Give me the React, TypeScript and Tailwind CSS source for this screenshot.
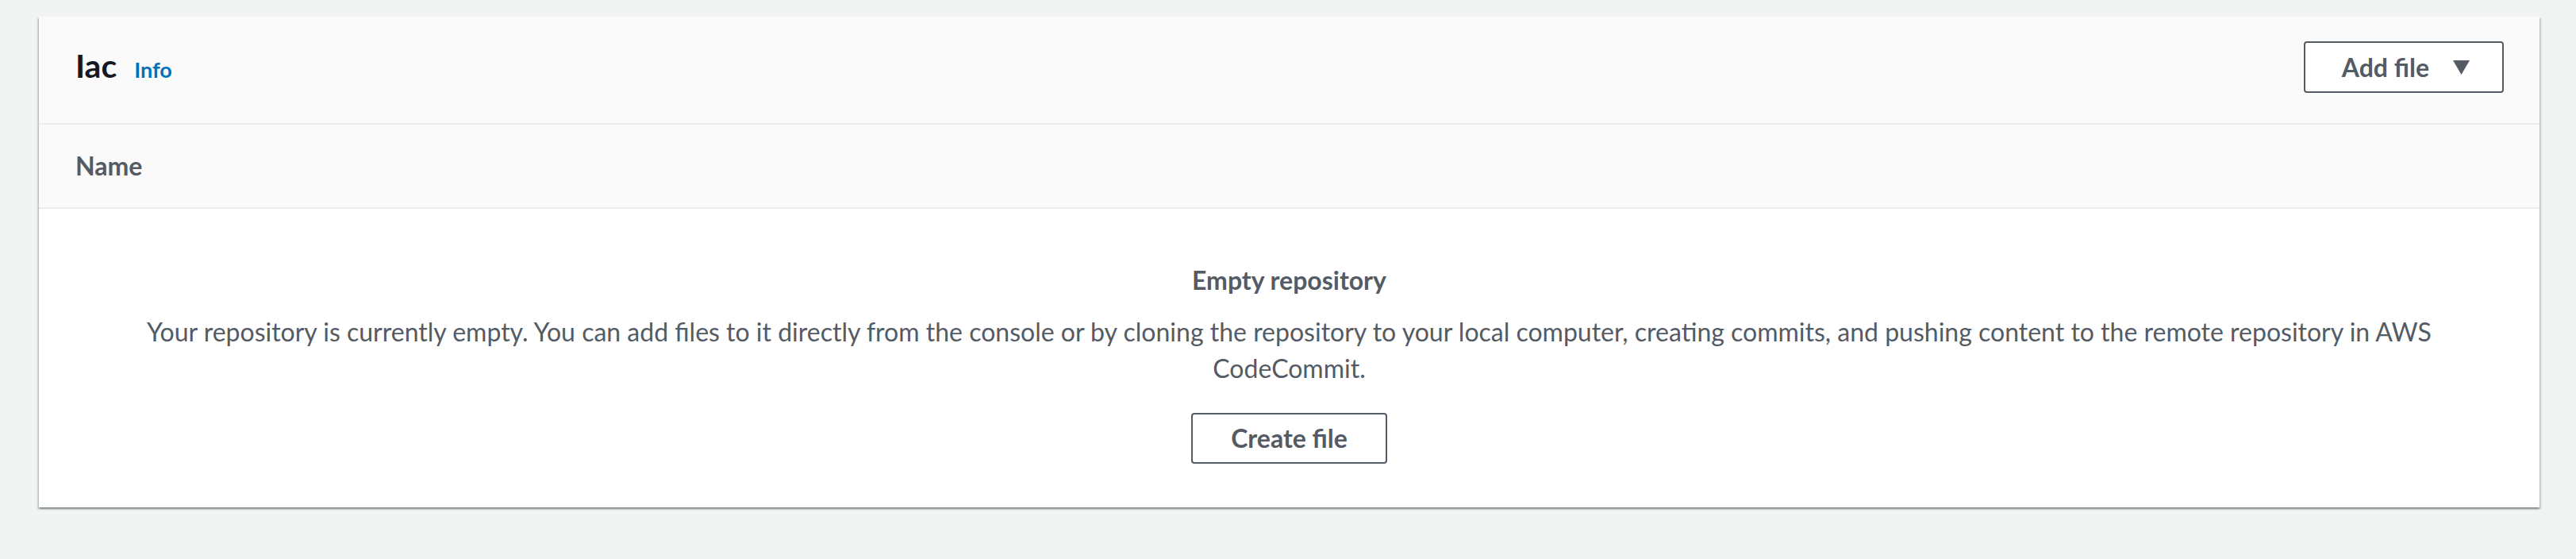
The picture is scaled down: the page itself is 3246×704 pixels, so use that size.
export default function App() {
  return (
    <div className="min-h-screen bg-[#f2f3f3] pl-[49px] pr-[46px] pt-[21px] font-['Lato',sans-serif]">
      <div className="bg-white shadow-[0_2px_2px_0_rgba(0,28,36,0.3),2px_2px_2px_0_rgba(0,28,36,0.15),-2px_2px_2px_0_rgba(0,28,36,0.15)]">
        {/* header */}
        <div className="flex items-center justify-between bg-[#fafafa] pl-[46px] pr-[45px] pt-[31px] pb-[38px]">
          <div className="flex items-baseline gap-[22px]">
            <h2 className="text-[41px] font-bold leading-[46px] text-[#16191f]">Iac</h2>
            <a className="text-[27px] font-bold text-[#0073bb]">Info</a>
          </div>
          <button className="flex h-[65px] items-center gap-[30px] rounded-[4px] border-2 border-[#545b64] bg-white pl-[46px] pr-[41px] text-[32px] font-bold text-[#545b64]">
            <span>Add file</span>
            <svg width="21" height="18" viewBox="0 0 21 18">
              <polygon points="0,0 21,0 10.5,18" fill="#545b64" />
            </svg>
          </button>
        </div>

        {/* table header */}
        <div className="flex h-[108px] items-center border-y-2 border-[#eaeded] bg-[#fafafa] px-[46px]">
          <span className="text-[32px] font-bold text-[#545b64]">Name</span>
        </div>

        {/* empty state */}
        <div className="flex flex-col items-center px-[46px] pt-[67px] pb-[55px] text-center text-[32px] leading-[46px] text-[#545b64]">
          <div className="font-bold">Empty repository</div>
          <p className="mt-[19px]">
            Your repository is currently empty. You can add files to it directly from the console or by cloning the repository to your local computer, creating commits, and pushing content to the remote repository in AWS CodeCommit.
          </p>
          <button className="mt-[33px] h-[64px] rounded-[4px] border-2 border-[#545b64] bg-white px-[48px] font-bold text-[#545b64]">
            Create file
          </button>
        </div>
      </div>
    </div>
  );
}
